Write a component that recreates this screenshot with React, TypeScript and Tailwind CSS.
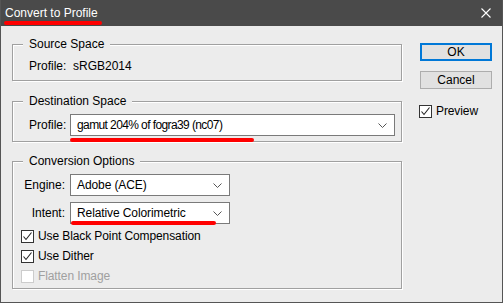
import React from 'react';

const font = { fontFamily: '"Segoe UI", "Liberation Sans", Arial, sans-serif' };

function Chevron() {
  return (
    <svg width="9" height="5" viewBox="0 0 9 5" className="shrink-0">
      <polyline points="0.5,0.5 4.5,4.5 8.5,0.5" fill="none" stroke="#555" strokeWidth="1" />
    </svg>
  );
}

function Select({ value, width, tight = false }: { value: string; width: string; tight?: boolean }) {
  return (
    <div className={`${width} h-[22px] bg-white border border-[#7a7a7a] flex items-center justify-between pl-[6px] pr-[7px]`}>
      <span className={`leading-none ${tight ? 'tracking-[-0.6px]' : 'tracking-[-0.1px]'}`}>{value}</span>
      <Chevron />
    </div>
  );
}

function Check({ label, checked = true, disabled = false }: { label: string; checked?: boolean; disabled?: boolean }) {
  return (
    <div className="flex items-center h-[20px] gap-[4px]">
      <div className={`w-[13px] h-[13px] border bg-white flex items-center justify-center ${disabled ? 'border-[#cccccc]' : 'border-[#333333]'}`}>
        {checked && (
          <svg width="11" height="11" viewBox="0 0 11 11">
            <polyline points="1.5,5.5 4,8.5 9.5,1.5" fill="none" stroke="#222" strokeWidth="1.1" />
          </svg>
        )}
      </div>
      <span className={`tracking-[-0.1px] ${disabled ? 'text-[#a0a0a0]' : 'text-black'}`}>{label}</span>
    </div>
  );
}

function Group({ title, className, children }: { title: string; className: string; children: React.ReactNode }) {
  return (
    <div className={`relative border border-[#a0a0a0] shadow-[inset_1px_1px_0_#fff,1px_1px_0_#fff] ${className}`}>
      <span className="absolute -top-[9px] left-[10px] px-[6px] bg-[#ececec] leading-[16px]">{title}</span>
      {children}
    </div>
  );
}

export default function App() {
  return (
    <div style={font} className="relative w-[503px] h-[303px] bg-[#ececec] border-x border-b border-[#555] text-[12px] text-black flex flex-col overflow-hidden">
      {/* title bar */}
      <div className="h-[26px] bg-[#4a4a4a] flex items-center justify-between pl-[4px] pr-[11px] shrink-0">
        <span className="text-white leading-none">Convert to Profile</span>
        <svg width="10" height="10" viewBox="0 0 10 10">
          <path d="M0.5 0.5 L9.5 9.5 M9.5 0.5 L0.5 9.5" stroke="#fff" strokeWidth="1.1" />
        </svg>
      </div>

      <div className="flex">
        {/* left column */}
        <div className="pl-[11px] w-[401px] shrink-0">
          <Group title="Source Space" className="mt-[18px] h-[37px] pt-[13px] pl-[16px]">
            <div className="flex leading-[16px]">
              <span className="w-[44px]">Profile:</span>
              <span>sRGB2014</span>
            </div>
          </Group>

          <Group title="Destination Space" className="mt-[20px] h-[41px] pt-[12px] pl-[16px]">
            <div className="flex items-center">
              <span className="w-[41px]">Profile:</span>
              <Select value="gamut 204% of fogra39 (nc07)" width="w-[325px]" tight />
            </div>
          </Group>

          <Group title="Conversion Options" className="mt-[19px] h-[128px] pt-[12px]">
            <div className="flex items-center">
              <span className="w-[57px] text-right pr-[5px]">Engine:</span>
              <Select value="Adobe (ACE)" width="w-[160px]" />
            </div>
            <div className="flex items-center mt-[6px]">
              <span className="w-[57px] text-right pr-[5px]">Intent:</span>
              <Select value="Relative Colorimetric" width="w-[160px]" />
            </div>
            <div className="pl-[8px] mt-[2px]">
              <Check label="Use Black Point Compensation" />
              <Check label="Use Dither" />
              <Check label="Flatten Image" checked={false} disabled />
            </div>
          </Group>
        </div>

        {/* right column */}
        <div className="ml-[18px] mt-[17px] flex flex-col">
          <button className="w-[72px] h-[18px] bg-[#e1e1e1] border-2 border-[#0078d7] flex items-center justify-center leading-none">OK</button>
          <button className="mt-[10px] w-[72px] h-[18px] bg-[#e1e1e1] border border-[#adadad] flex items-center justify-center leading-none">Cancel</button>
          <div className="mt-[12px] -ml-[1px]">
            <Check label="Preview" />
          </div>
        </div>
      </div>

      {/* red annotation strokes */}
      <div className="absolute left-[3px] top-[21px] w-[98px] h-[4px] rounded-full bg-[#ff0000] blur-[0.6px]" />
      <div className="absolute left-[69px] top-[138px] w-[184px] h-[4px] rounded-full bg-[#ff0000] blur-[0.6px]" />
      <div className="absolute left-[70px] top-[221px] w-[145px] h-[4px] rounded-full bg-[#ff0000] blur-[0.6px]" />
    </div>
  );
}
